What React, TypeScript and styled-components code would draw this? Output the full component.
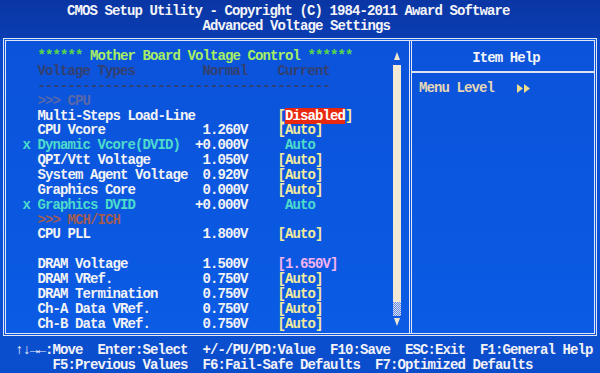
import styled, { createGlobalStyle } from 'styled-components';

const LH = 14.86;

const GlobalStyle = createGlobalStyle`
  html, body {
    margin: 0;
    padding: 0;
    background: #0a4bcb;
  }
  body {
    font-family: "Liberation Mono", "DejaVu Sans Mono", monospace;
    font-weight: bold;
    font-size: 14px;
    letter-spacing: -0.9px;
    line-height: ${LH}px;
    color: #f2f2f4;
  }
`;

type Tone = 'white' | 'cyan' | 'gray' | 'cpu' | 'mch' | 'yellow' | 'pink' | 'green';

const colors: Record<Tone, string> = {
  white: '#f3f3f5',
  cyan: '#4ddccc',
  gray: '#34406f',
  cpu: '#5a68a8',
  mch: '#a15c52',
  yellow: '#f4eb9e',
  pink: '#f2b2ee',
  green: '#a8ee64',
};

const Screen = styled.div`
  width: 600px;
  height: 373px;
  overflow: hidden;
  display: flex;
  flex-direction: column;
  background: linear-gradient(180deg, #0a45c2 0%, #0b52d6 60%, #0a4dcc 100%);
`;

const TitleBar = styled.div`
  height: 38px;
  box-sizing: border-box;
  padding-top: 4px;
  background: linear-gradient(180deg, #0a36a4 0%, #0a3db2 100%);
  color: #f4f4f8;
`;

const Line = styled.div<{ $indent: number }>`
  padding-left: ${p => p.$indent}px;
  white-space: pre;
  height: ${LH}px;
`;

const Frame = styled.div`
  margin: 0 3px;
  height: 302px;
  box-sizing: border-box;
  border: 3px double #e2e5f2;
  background: linear-gradient(180deg, #0b53da 0%, #0b5be4 100%);
  display: grid;
  grid-template-columns: 403px 1fr;
`;

const LeftPanel = styled.div`
  display: grid;
  grid-template-columns: 1fr 8px;
  padding: 8.5px 8px 0 16.5px;
`;

const List = styled.div`
  display: flex;
  flex-direction: column;
`;

const Row = styled.div`
  display: grid;
  grid-template-columns: 15px 157.5px 52.5px 30px auto;
  height: ${LH}px;
  white-space: pre;
`;

const Cell = styled.span<{ $tone: Tone; $right?: boolean }>`
  color: ${p => colors[p.$tone]};
  text-align: ${p => (p.$right ? 'right' : 'left')};
`;

const FullRow = styled.div<{ $tone: Tone }>`
  height: ${LH}px;
  padding-left: 15px;
  white-space: pre;
  color: ${p => colors[p.$tone]};
`;

const Stars = styled.span`
  color: #5ad84a;
`;

const Highlight = styled.span`
  background: #e8280f;
  color: #ffffff;
`;

const ScrollBar = styled.div`
  display: flex;
  flex-direction: column;
  align-items: center;
  padding-top: 3px;
`;

const ArrowUp = styled.span`
  width: 0;
  height: 0;
  border-left: 3px solid transparent;
  border-right: 3px solid transparent;
  border-bottom: 8px solid #efe6cf;
  margin-bottom: 5px;
`;

const ArrowDown = styled.span`
  width: 0;
  height: 0;
  border-left: 3px solid transparent;
  border-right: 3px solid transparent;
  border-top: 8px solid #efe6cf;
`;

const Track = styled.div`
  width: 8px;
  height: 237px;
  background: #f1e9d4;
`;

const Dither = styled.div`
  width: 8px;
  height: 14px;
  margin-bottom: 2px;
  background-image: conic-gradient(#dfe0ec 25%, #5f8be6 0 50%, #dfe0ec 0 75%, #5f8be6 0);
  background-size: 2px 2px;
`;

const HelpPanel = styled.div`
  border-left: 3px double #e2e5f2;
  display: flex;
  flex-direction: column;
`;

const HelpTitle = styled.div`
  height: 32px;
  box-sizing: border-box;
  padding: 6px 0 0 6px;
  border-bottom: 2px solid #dfe2f0;
  display: flex;
  align-items: center;
  justify-content: center;
  color: #f4f4f8;
`;

const HelpBody = styled.div`
  padding: 8px 0 0 7px;
  display: flex;
  align-items: center;
  height: ${LH}px;
  color: #e5d7b6;
  white-space: pre;
`;

const Footer = styled.div`
  flex: 1;
  padding-top: 7px;
  color: #f2f2f8;
`;

type Item = {
  marker?: boolean;
  name: string;
  normal?: string;
  current?: React.ReactNode;
  tone: Tone;
  currentTone: Tone;
};

const items: Item[] = [
  { name: 'Multi-Steps Load-Line', current: <>[<Highlight>Disabled</Highlight>]</>, tone: 'white', currentTone: 'yellow' },
  { name: 'CPU Vcore', normal: '1.260V', current: '[Auto]', tone: 'white', currentTone: 'yellow' },
  { marker: true, name: 'Dynamic Vcore(DVID)', normal: '+0.000V', current: ' Auto', tone: 'cyan', currentTone: 'cyan' },
  { name: 'QPI/Vtt Voltage', normal: '1.050V', current: '[Auto]', tone: 'white', currentTone: 'yellow' },
  { name: 'System Agent Voltage', normal: '0.920V', current: '[Auto]', tone: 'white', currentTone: 'yellow' },
  { name: 'Graphics Core', normal: '0.000V', current: '[Auto]', tone: 'white', currentTone: 'yellow' },
  { marker: true, name: 'Graphics DVID', normal: '+0.000V', current: ' Auto', tone: 'cyan', currentTone: 'cyan' },
];

const dramItems: Item[] = [
  { name: 'DRAM Voltage', normal: '1.500V', current: '[1.650V]', tone: 'white', currentTone: 'pink' },
  { name: 'DRAM VRef.', normal: '0.750V', current: '[Auto]', tone: 'white', currentTone: 'yellow' },
  { name: 'DRAM Termination', normal: '0.750V', current: '[Auto]', tone: 'white', currentTone: 'yellow' },
  { name: 'Ch-A Data VRef.', normal: '0.750V', current: '[Auto]', tone: 'white', currentTone: 'yellow' },
  { name: 'Ch-B Data VRef.', normal: '0.750V', current: '[Auto]', tone: 'white', currentTone: 'yellow' },
];

function SettingRow({ item }: { item: Item }) {
  return (
    <Row>
      <Cell $tone={item.tone}>{item.marker ? 'x' : ''}</Cell>
      <Cell $tone={item.tone}>{item.name}</Cell>
      <Cell $tone="white" $right>{item.normal ?? ''}</Cell>
      <span />
      <Cell $tone={item.currentTone}>{item.current}</Cell>
    </Row>
  );
}

function DoubleArrow() {
  return (
    <svg width="14" height="9" viewBox="0 0 14 9">
      <polygon points="0,0 6,4.5 0,9" fill="#eedc8c" />
      <polygon points="7,0 13,4.5 7,9" fill="#eedc8c" />
    </svg>
  );
}

export default function App() {
  return (
    <>
      <GlobalStyle />
      <Screen>
        <TitleBar>
          <Line $indent={67}>CMOS Setup Utility - Copyright (C) 1984-2011 Award Software</Line>
          <Line $indent={202.5}>Advanced Voltage Settings</Line>
        </TitleBar>
        <Frame>
          <LeftPanel>
            <List>
              <FullRow $tone="green">
                <Stars>******</Stars> Mother Board Voltage Control <Stars>******</Stars>
              </FullRow>
              <Row>
                <span />
                <Cell $tone="gray">Voltage Types</Cell>
                <Cell $tone="gray" $right>Normal</Cell>
                <span />
                <Cell $tone="gray">Current</Cell>
              </Row>
              <FullRow $tone="gray">{'-'.repeat(39)}</FullRow>
              <FullRow $tone="cpu">{'>>> CPU'}</FullRow>
              {items.map(it => (
                <SettingRow key={it.name} item={it} />
              ))}
              <FullRow $tone="mch">{'>>> MCH/ICH'}</FullRow>
              <SettingRow item={{ name: 'CPU PLL', normal: '1.800V', current: '[Auto]', tone: 'white', currentTone: 'yellow' }} />
              <FullRow $tone="white"> </FullRow>
              {dramItems.map(it => (
                <SettingRow key={it.name} item={it} />
              ))}
            </List>
            <ScrollBar>
              <ArrowUp />
              <Track />
              <Dither />
              <ArrowDown />
            </ScrollBar>
          </LeftPanel>
          <HelpPanel>
            <HelpTitle>Item Help</HelpTitle>
            <HelpBody>
              {'Menu Level   '}
              <DoubleArrow />
            </HelpBody>
          </HelpPanel>
        </Frame>
        <Footer>
          <Line $indent={15}>↑↓→←:Move  Enter:Select  +/-/PU/PD:Value  F10:Save  ESC:Exit  F1:General Help</Line>
          <Line $indent={52.5}>F5:Previous Values  F6:Fail-Safe Defaults  F7:Optimized Defaults</Line>
        </Footer>
      </Screen>
    </>
  );
}
